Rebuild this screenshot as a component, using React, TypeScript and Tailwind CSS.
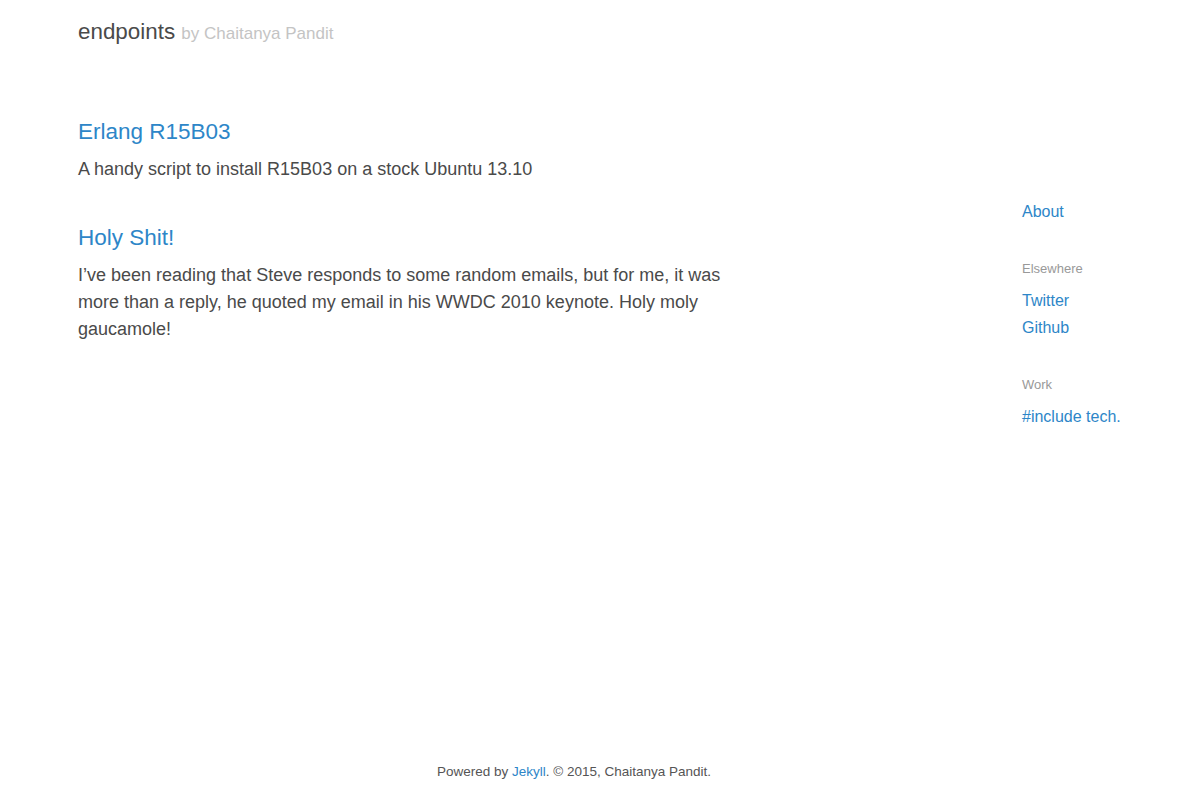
import React from 'react';

const posts = [
  {
    title: 'Erlang R15B03',
    excerpt: 'A handy script to install R15B03 on a stock Ubuntu 13.10',
  },
  {
    title: 'Holy Shit!',
    excerpt:
      'I’ve been reading that Steve responds to some random emails, but for me, it was more than a reply, he quoted my email in his WWDC 2010 keynote. Holy moly gaucamole!',
  },
];

export default function App() {
  return (
    <div className="min-h-[800px] flex flex-col bg-white text-[#4a4a4a] font-['Liberation_Sans',Arial,sans-serif]">
      <header className="pl-[78px] pt-[18px]">
        <h1 className="text-[22.4px] leading-[28px]">
          endpoints <span className="text-[17px] text-[#c4c4c4]">by Chaitanya Pandit</span>
        </h1>
      </header>

      <div className="flex flex-1 pl-[78px]">
        <main className="w-[660px] pt-[69px]">
          {posts.map((post) => (
            <article key={post.title} className="mb-[40px]">
              <h2 className="text-[22.5px] leading-[30px] text-[#2d86c8]">{post.title}</h2>
              <p className="mt-[9px] text-[18px] leading-[27px]">{post.excerpt}</p>
            </article>
          ))}
        </main>

        <aside className="ml-auto w-[178px] pt-[150px] text-[16px]">
          <a className="block leading-[27px] text-[#2d86c8]">About</a>
          <h4 className="mt-[34px] text-[13px] text-[#999] leading-[20px]">Elsewhere</h4>
          <ul className="mt-[8px] leading-[27px] text-[#2d86c8]">
            <li>Twitter</li>
            <li>Github</li>
          </ul>
          <h4 className="mt-[34px] text-[13px] text-[#999] leading-[20px]">Work</h4>
          <ul className="mt-[8px] leading-[27px] text-[#2d86c8]">
            <li>#include tech.</li>
          </ul>
        </aside>
      </div>

      <footer className="pb-[18px] pr-[52px] text-center text-[13.5px] leading-[20px] text-[#555]">
        Powered by <a className="text-[#2d86c8]">Jekyll</a>. © 2015, Chaitanya Pandit.
      </footer>
    </div>
  );
}
